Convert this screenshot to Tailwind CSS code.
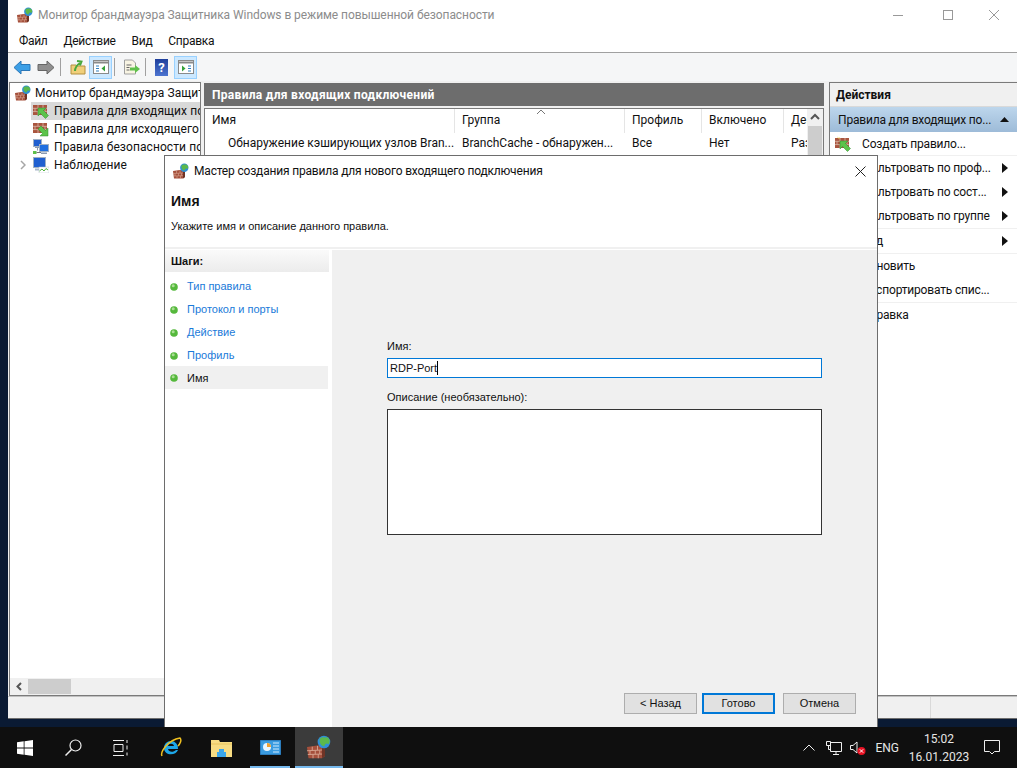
<!DOCTYPE html>
<html lang="ru">
<head>
  <meta charset="UTF-8" />
  <title>Монитор брандмауэра</title>
  <script src="https://cdn.jsdelivr.net/npm/@tailwindcss/browser@4"></script>
</head>
<body class="relative w-[1017px] h-[768px] overflow-hidden bg-[#0a1a33] font-['Roboto',sans-serif] text-[12px] leading-none tracking-[-0.18px] text-[#111]">
  <svg class="hidden">
    <symbol id="wall" viewBox="0 0 16 16">
      <path d="M0 8l10-1.500 2 1V14l-2 1.500L1 15.500z" fill="#a5503c"/>
      <path d="M10 6.500l2 1V14l-2 1.500z" fill="#6f3426"/>
      <path d="M0 10.500l10-.5M.5 13l9.500-.3M3.500 7.800v2.500M7 7.300v2.700M2 10.500v2.500M5.500 10.300v2.500M8.500 10.200v2.500M4 13v2.500M7.500 12.800v2.700" stroke="#d8a894" stroke-width=".6" fill="none"/>
      <circle cx="11.300" cy="4.700" r="4.200" fill="#2f8fd8"/>
      <path d="M8.500 2.500c2-2 3-.5 5-1 2 1.500 2 3 1 4.500-1.500-1-2.500 0-3 1.500-1.500 0-3.500-1.500-3-5z" fill="#5bb84c"/>
    </symbol>
    <symbol id="wallin" viewBox="0 0 16 16">
      <rect x="0" y="2" width="14" height="10" fill="#a9553f"/>
      <path d="M0 5.300h14M0 8.600h14M5 2v3.300M10 2v3.300M2 5.300v3.300M7 5.300v3.300M12 5.300v3.300M5 8.600V12M10 8.600V12" stroke="#e0c4b4" stroke-width=".7" fill="none"/>
    </symbol>
    <symbol id="dot" viewBox="0 0 8 8">
      <circle cx="4" cy="4" r="3.800" fill="#55b83c"/>
      <circle cx="3.200" cy="2.800" r="1.500" fill="#a9dd93"/>
    </symbol>
    <symbol id="tri" viewBox="0 0 6 10">
      <path d="M0 0l6 5-6 5z" fill="#111"/>
    </symbol>
    <symbol id="pc" viewBox="0 0 16 16">
      <rect x=".5" y=".5" width="8" height="7" fill="#1f5fd0" stroke="#9fb0c4"/>
      <path d="M2 8.500h5M4.500 8v3.500" stroke="#8a9ab0"/>
      <rect x="6.500" y="5.500" width="9" height="7" fill="#1f6fe0" stroke="#9fb0c4"/>
      <rect x="8" y="13.500" width="6" height="1.500" fill="#8a9ab0"/>
      <rect x="0" y="12" width="3.500" height="3" fill="#5fc04a"/>
      <path d="M3.500 13.500H8" stroke="#777"/>
    </symbol>
    <symbol id="pc2" viewBox="0 0 16 16">
      <rect x=".5" y=".5" width="12" height="10" fill="#1f5fd0" stroke="#9fb0c4"/>
      <path d="M2 11.500h9v2H2z" fill="#a9b7c8"/>
      <rect x="6" y="10" width="10" height="6" fill="#fff" stroke="#b8c4d0" stroke-width=".5"/>
      <path d="M6.500 14l2.500-2 2 2 2-2.500 2 1.500" stroke="#4cb03a" fill="none"/>
    </symbol>
    <symbol id="inarrow" viewBox="0 0 16 16">
      <path d="M5 5h8l-2.500 2.500 5 5-3 3-5-5L5 13z" fill="#5cc34a" stroke="#2e8a2e" stroke-width=".5"/>
    </symbol>
  </svg>

  <!-- Главное окно -->
  <div class="absolute left-[8px] top-0 w-[1009px] h-[719px] flex flex-col bg-[#f0f0f0]">
    <div class="h-[30px] shrink-0 flex items-center bg-white text-[#8c8c8c]">
      <svg class="ml-[9px] mr-[5px] w-[16px] h-[16px]"><use href="#wall"/></svg>
      <span class="tracking-[-0.07px]">Монитор брандмауэра Защитника Windows в режиме повышенной безопасности</span>
      <div class="ml-auto flex items-center">
        <svg class="w-[46px] h-[12px]" viewBox="0 0 46 12"><path d="M18 6.500h10" stroke="#999"/></svg>
        <svg class="w-[46px] h-[12px] ml-[4px]" viewBox="0 0 46 12"><rect x="18.500" y="1.500" width="9" height="9" fill="none" stroke="#999"/></svg>
        <svg class="w-[46px] h-[12px]" viewBox="0 0 46 12"><path d="M18 1l10 10M28 1L18 11" stroke="#999"/></svg>
      </div>
    </div>
    <div class="h-[23px] shrink-0 flex items-center gap-[16px] pl-[11px] bg-white border-b border-[#a0a0a0] tracking-[-0.3px]">
      <span>Файл</span><span>Действие</span><span>Вид</span><span>Справка</span>
    </div>
    <div class="h-[28px] shrink-0 flex items-center pl-[6px] bg-[#f5f6f7]">
      <svg class="w-[17px] h-[15px]" viewBox="0 0 17 15"><path d="M0 7.500L7 1v3.500h9v6H7V14z" fill="#3c9fe6" stroke="#2a77b8"/></svg>
      <svg class="w-[17px] h-[15px] ml-[6px]" viewBox="0 0 17 15"><path d="M17 7.500L10 1v3.500H1v6h9V14z" fill="#8f8f8f" stroke="#666"/></svg>
      <div class="w-px h-[18px] bg-[#a0a0a0] mx-[6px]"></div>
      <svg class="w-[16px] h-[16px] ml-[3px] mr-[3px]" viewBox="0 0 16 16"><path d="M1 6h5l1 1h8v8H1z" fill="#f0cf7a" stroke="#b49040"/><path d="M5 12c0-4 2-6 5-8M7 2l4.500.5-1.500 4" stroke="#4aa83c" stroke-width="2" fill="none"/></svg>
      <div class="w-[23px] h-[23px] flex items-center justify-center bg-[#cce8ff] border border-[#99d1ff]">
        <svg class="w-[16px] h-[14px]" viewBox="0 0 16 14"><rect x=".5" y=".5" width="15" height="13" fill="#fff" stroke="#8a8a8a"/><path d="M1 2.500h14" stroke="#8a8a8a" stroke-width="2"/><path d="M3 6h3M3 8.500h3M3 11h3" stroke="#2f7fc0"/><path d="M12 5.500v6L8.500 8.500z" fill="#35a03a"/></svg>
      </div>
      <div class="w-px h-[18px] bg-[#a0a0a0] ml-[2px] mr-[8px]"></div>
      <svg class="w-[17px] h-[17px] mr-[5px]" viewBox="0 0 17 17"><path d="M1.500 1h8l3 3v11h-11z" fill="#f8f4e3" stroke="#a0a0a0"/><path d="M3.500 6h5M3.500 8.500h3M3.500 11h3" stroke="#666"/><path d="M7 8.500h5V6l5 4-5 4v-2.500H7z" fill="#5fc04a"/></svg>
      <div class="w-px h-[18px] bg-[#a0a0a0] mr-[9px]"></div>
      <div class="w-[13px] h-[17px] mr-[6px] flex items-center justify-center bg-gradient-to-b from-[#1f3f9c] to-[#4d74d0] text-white text-[13px] font-bold">?</div>
      <div class="w-[23px] h-[23px] flex items-center justify-center bg-[#cce8ff] border border-[#99d1ff]">
        <svg class="w-[16px] h-[14px]" viewBox="0 0 16 14"><rect x=".5" y=".5" width="15" height="13" fill="#fff" stroke="#8a8a8a"/><path d="M1 2.500h14" stroke="#8a8a8a" stroke-width="2"/><path d="M10 6h3M10 8.500h3M10 11h3" stroke="#2f7fc0"/><path d="M4 5.500v6l3.500-3z" fill="#35a03a"/></svg>
      </div>
    </div>

    <!-- Панели -->
    <div class="flex-1 min-h-0 flex pt-[1px]">
      <div class="w-[192px] ml-[1px] h-[614px] flex flex-col bg-white border border-[#7a7a7a] overflow-hidden">
        <div class="flex-1 pt-[1px] tracking-[0.08px]">
          <div class="h-[18px] flex items-center whitespace-nowrap overflow-hidden pl-[5px]">
            <svg class="w-[16px] h-[16px] mr-[4px] shrink-0"><use href="#wall"/></svg>Монитор брандмауэра Защитника
          </div>
          <div class="h-[18px] ml-[21px] flex items-center whitespace-nowrap overflow-hidden bg-[#d9d9d9] pl-[2px]">
            <svg class="w-[16px] h-[16px] mr-[5px] shrink-0"><use href="#wallin"/><use href="#inarrow"/></svg>Правила для входящих подключений
          </div>
          <div class="h-[18px] ml-[21px] flex items-center whitespace-nowrap overflow-hidden pl-[2px]">
            <svg class="w-[16px] h-[16px] mr-[5px] shrink-0"><use href="#wallin"/><path d="M15 15H7l2.500-2.500-4.500-4.500 3-3 4.500 4.500L15 7z" fill="#5cc34a" stroke="#2e8a2e" stroke-width=".5"/></svg>Правила для исходящего подключения
          </div>
          <div class="h-[18px] ml-[21px] flex items-center whitespace-nowrap overflow-hidden pl-[2px]">
            <svg class="w-[16px] h-[16px] mr-[5px] shrink-0"><use href="#pc"/></svg>Правила безопасности подключения
          </div>
          <div class="h-[18px] flex items-center whitespace-nowrap overflow-hidden pl-[10px]">
            <svg class="w-[6px] h-[10px] mr-[7px] shrink-0" viewBox="0 0 6 10"><path d="M1 1l4 4-4 4" stroke="#a6a6a6" stroke-width="1.500" fill="none"/></svg>
            <svg class="w-[16px] h-[16px] mr-[5px] shrink-0"><use href="#pc2"/></svg>Наблюдение
          </div>
        </div>
        <div class="h-[17px] shrink-0 flex items-center bg-[#f0f0f0]">
          <svg class="w-[18px] h-[17px]" viewBox="0 0 18 17"><path d="M11 5L7.500 8.500 11 12" stroke="#555" stroke-width="2" fill="none"/></svg>
          <div class="w-[43px] h-[15px] bg-[#cdcdcd]"></div>
        </div>
      </div>

      <div class="w-[620px] ml-[3px] pt-[1px] h-[614px] flex flex-col">
        <div class="h-[23px] shrink-0 flex items-center pl-[7px] bg-[#6d6d6d] text-white font-bold border border-[#6d6d6d] tracking-[0.3px]">Правила для входящих подключений</div>
        <div class="mt-[2px] flex-1 relative bg-white border border-[#7a7a7a] overflow-hidden tracking-normal">
          <div class="grid grid-cols-[250px_170px_77px_82px_40px]">
            <div class="h-[24px] flex items-center pl-[7px] pb-[2px] border-r border-[#e5e5e5]">Имя</div>
            <div class="h-[24px] flex items-center pl-[7px] pb-[2px] border-r border-[#e5e5e5]">Группа</div>
            <div class="h-[24px] flex items-center pl-[7px] pb-[2px] border-r border-[#e5e5e5]">Профиль</div>
            <div class="h-[24px] flex items-center pl-[7px] pb-[2px] border-r border-[#e5e5e5]">Включено</div>
            <div class="h-[24px] flex items-center pl-[7px] pb-[2px] overflow-hidden">Действие</div>
            <div class="h-[22px] flex items-center pl-[23px] pb-[3px] whitespace-nowrap overflow-hidden">Обнаружение кэширующих узлов Bran...</div>
            <div class="h-[22px] flex items-center pl-[7px] pb-[3px] whitespace-nowrap overflow-hidden">BranchCache - обнаружен...</div>
            <div class="h-[22px] flex items-center pl-[7px] pb-[3px]">Все</div>
            <div class="h-[22px] flex items-center pl-[7px] pb-[3px]">Нет</div>
            <div class="h-[22px] flex items-center pl-[7px] pb-[3px] overflow-hidden">Разрешить</div>
          </div>
          <svg class="absolute left-[331px] top-0 w-[10px] h-[6px]" viewBox="0 0 10 6"><path d="M1 5l4-4 4 4" stroke="#777" fill="none"/></svg>
          <!-- Вертикальная полоса прокрутки -->
          <div class="absolute right-0 top-0 bottom-0 w-[16px] flex flex-col bg-[#f0f0f0]">
            <svg class="w-[16px] h-[17px] shrink-0" viewBox="0 0 16 17"><path d="M4 10l4-4 4 4" stroke="#555" stroke-width="2" fill="none"/></svg>
            <div class="flex-1 mx-[1px] bg-[#cdcdcd]"></div>
          </div>
        </div>
      </div>

      <div class="ml-[5px] flex-1 h-[614px] flex flex-col bg-white border border-[#7a7a7a] border-r-0">
        <div class="h-[24px] shrink-0 flex items-center pl-[6px] bg-[#f0f0f0] font-bold border-b border-[#d9d9d9] tracking-normal">Действия</div>
        <div class="h-[25px] shrink-0 flex items-center justify-between whitespace-nowrap pl-[8px] pr-[8px] bg-gradient-to-b from-[#bdd6ec] to-[#9dbbd8]">
          <span>Правила для входящих по...</span>
          <svg class="w-[9px] h-[5px]" viewBox="0 0 9 5"><path d="M0 5l4.500-5L9 5z" fill="#111"/></svg>
        </div>
        <div class="h-[24px] flex items-center pl-[5px] border-b border-[#f0f0f0]"><svg class="w-[16px] h-[16px] mr-[11px]"><use href="#wallin"/><use href="#inarrow"/><path d="M2 0l.8 2 2-.8-.8 2" fill="#f5d040"/></svg>Создать правило...</div>
        <div class="h-[24px] flex items-center justify-between pl-[32px] pr-[9px]"><span>Фильтровать по проф...</span><svg class="w-[6px] h-[10px]"><use href="#tri"/></svg></div>
        <div class="h-[24px] flex items-center justify-between pl-[32px] pr-[9px]"><span>Фильтровать по сост...</span><svg class="w-[6px] h-[10px]"><use href="#tri"/></svg></div>
        <div class="h-[25px] flex items-center justify-between pl-[32px] pr-[9px] border-b border-[#f0f0f0]"><span>Фильтровать по группе</span><svg class="w-[6px] h-[10px]"><use href="#tri"/></svg></div>
        <div class="h-[25px] flex items-center justify-between pl-[32px] pr-[9px] border-b border-[#f0f0f0]"><span>Вид</span><svg class="w-[6px] h-[10px]"><use href="#tri"/></svg></div>
        <div class="h-[24px] flex items-center pl-[32px]">Обновить</div>
        <div class="h-[25px] flex items-center pl-[32px] border-b border-[#f0f0f0]">Экспортировать спис...</div>
        <div class="h-[24px] flex items-center pl-[32px]">Справка</div>
      </div>
    </div>
    <div class="h-[23px] shrink-0 flex justify-end border-t border-[#c0c0c0] border-b border-b-[#6d6d6d]">
      <div class="w-[87px] border-l border-[#d9d9d9]"></div>
    </div>
  </div>

  <!-- Мастер -->
  <div class="absolute left-[164px] top-[155px] w-[714px] h-[572px] flex flex-col bg-white border-l border-t border-r border-[#6d6d6d]">
    <div class="h-[30px] shrink-0 flex items-center">
      <svg class="ml-[8px] mr-[5px] w-[16px] h-[16px]"><use href="#wall"/></svg>
      <span>Мастер создания правила для нового входящего подключения</span>
      <svg class="ml-auto mr-[11px] w-[11px] h-[11px]" viewBox="0 0 11 11"><path d="M.5.500l10 10M10.500.500l-10 10" stroke="#222"/></svg>
    </div>
    <div class="h-[63px] shrink-0 pl-[6px] pt-[7px] border-b-2 border-[#f0f0f0] font-['Liberation_Sans',sans-serif] tracking-normal">
      <div class="font-bold text-[14px] leading-[16px]">Имя</div>
      <div class="mt-[12px] text-[11px]">Укажите имя и описание данного правила.</div>
    </div>
    <div class="flex-1 min-h-0 flex pt-[1px] font-['Liberation_Sans',sans-serif] text-[11px] tracking-normal">
      <div class="w-[164px] shrink-0">
        <div class="h-[22px] flex items-center pl-[6px] font-bold bg-gradient-to-b from-[#fafafa] to-[#ececec]">Шаги:</div>
        <div class="mt-[3px] text-[#1a7ad9]">
          <div class="h-[23px] flex items-center pl-[5px]"><svg class="w-[8px] h-[8px] mr-[9px]"><use href="#dot"/></svg>Тип правила</div>
          <div class="h-[23px] flex items-center pl-[5px]"><svg class="w-[8px] h-[8px] mr-[9px]"><use href="#dot"/></svg>Протокол и порты</div>
          <div class="h-[23px] flex items-center pl-[5px]"><svg class="w-[8px] h-[8px] mr-[9px]"><use href="#dot"/></svg>Действие</div>
          <div class="h-[23px] flex items-center pl-[5px]"><svg class="w-[8px] h-[8px] mr-[9px]"><use href="#dot"/></svg>Профиль</div>
          <div class="h-[23px] -mt-[1px] mr-[1px] flex items-center pl-[5px] pt-[1px] bg-[#f0f0f0] text-[#111]"><svg class="w-[8px] h-[8px] mr-[9px]"><use href="#dot"/></svg>Имя</div>
        </div>
      </div>
      <div class="ml-[3px] flex-1 flex flex-col bg-[#f0f0f0] pl-[55px] pr-[55px] pt-[91px]">
        <div>Имя:</div>
        <div class="mt-[6px] h-[20px] flex items-center pl-[2px] bg-white border border-[#0078d7]">RDP-Port<span class="w-px h-[14px] bg-black"></span></div>
        <div class="mt-[14px]">Описание (необязательно):</div>
        <div class="mt-[6px] h-[126px] bg-white border border-[#333]"></div>
        <div class="mt-[158px] -mr-[34px] flex justify-end">
          <div class="w-[73px] h-[21px] flex items-center justify-center bg-[#e1e1e1] border border-[#adadad]">&lt; Назад</div>
          <div class="w-[73px] h-[21px] ml-[5px] flex items-center justify-center bg-[#e1e1e1] border-2 border-[#0078d7]">Готово</div>
          <div class="w-[73px] h-[21px] ml-[8px] flex items-center justify-center bg-[#e1e1e1] border border-[#adadad]">Отмена</div>
        </div>
      </div>
    </div>
  </div>

  <!-- Панель задач -->
  <div class="absolute left-0 bottom-0 w-[1017px] h-[41px] flex items-center bg-[#0f0f0f] text-[#e6e6e6] tracking-normal">
    <div class="w-[49px] flex justify-center">
      <svg class="w-[16px] h-[16px]" viewBox="0 0 16 16"><path d="M0 2.300l6.700-1v6.300H0zM7.500 1.200L16 0v7.600H7.500zM0 8.400h6.700v6.300L0 13.700zM7.500 8.400H16V16l-8.500-1.200z" fill="#fff"/></svg>
    </div>
    <div class="w-[48px] flex justify-center">
      <svg class="w-[17px] h-[17px]" viewBox="0 0 17 17"><circle cx="10.500" cy="6.500" r="5.500" fill="none" stroke="#eee" stroke-width="1.200"/><path d="M6.500 10.500L.5 16.500" stroke="#eee" stroke-width="1.500"/></svg>
    </div>
    <div class="w-[48px] flex justify-center">
      <svg class="w-[16px] h-[16px]" viewBox="0 0 16 16"><path d="M0 .5h11M0 15.500h11M1 4.500h9v7H1zM14 0v3M14 5.500v4M14 12.500v3" stroke="#eee" fill="none"/></svg>
    </div>
    <div class="w-[48px] flex justify-center ml-[2px]">
      <svg class="w-[22px] h-[22px]" viewBox="0 0 22 22"><path d="M11 4a7 7 0 0 1 7 8H8c.5 3 5 4 8 1h2c-2 6-14 6-14-2 0-4 3-7 7-7zm-3 5h6c-.5-3-5.500-3-6 0z" fill="#1ea7e8"/><path d="M2 19C0 15 8 3 20 1c2 2 0 6-2 8" stroke="#f0c020" stroke-width="1.500" fill="none"/></svg>
    </div>
    <div class="w-[48px] flex justify-center ml-[2px]">
      <svg class="w-[21px] h-[18px]" viewBox="0 0 21 18"><path d="M0 1h8l1 2h12v15H0z" fill="#f7dc83"/><path d="M0 5h21" stroke="#e8c35e"/><path d="M6 18v-5h2v-3h5v3h2v5z" fill="#3aa6ea"/></svg>
    </div>
    <div class="w-[45px] ml-[5px] h-full relative flex justify-center items-center pr-[5px]">
      <svg class="w-[21px] h-[15px]" viewBox="0 0 21 15"><rect width="21" height="15" fill="#3a9be0" stroke="#1e5f98"/><circle cx="7" cy="7" r="4" fill="#eaf6ff"/><path d="M7 7V3a4 4 0 0 1 4 4z" fill="#f0a030"/><path d="M13 3h6M13 6h6M13 9h6M13 12h6" stroke="#cfeaff"/></svg>
      <div class="absolute left-0 right-[5px] bottom-0 h-[2px] bg-[#76b9ed]"></div>
    </div>
    <div class="w-[48px] h-full flex justify-center items-center bg-[#3b3b3b] border-b-2 border-[#76b9ed]">
      <svg class="w-[24px] h-[24px]"><use href="#wall"/></svg>
    </div>
    <div class="ml-auto flex items-center h-full">
      <svg class="w-[12px] h-[7px] mr-[11px]" viewBox="0 0 12 7"><path d="M.5 6.500l5.500-5.500 5.500 5.500" stroke="#eee" fill="none"/></svg>
      <svg class="w-[16px] h-[16px] mr-[8px]" viewBox="0 0 16 16"><path d="M4.500 2.500h11v9h-11zM10 11.500v3M7 14.500h6M.5 1.500h4v4h-4zM2.500 5.500v4H4.500" stroke="#eee" fill="none"/></svg>
      <svg class="w-[16px] h-[16px] mr-[9px]" viewBox="0 0 16 16"><path d="M.5 5.500h2.500L7 2v11L3 9.500H.5z" stroke="#eee" fill="none"/><circle cx="11.500" cy="11" r="4" fill="#e81123"/><path d="M9.800 9.300l3.400 3.400M13.200 9.300l-3.400 3.400" stroke="#fff"/></svg>
      <span class="mr-[9px]">ENG</span>
      <div class="w-[62px] text-center leading-[18px] mr-[14px]"><div>15:02</div><div>16.01.2023</div></div>
      <svg class="w-[16px] h-[15px] mr-[17px]" viewBox="0 0 16 15"><path d="M.5.500h15v11h-5L8 14l-2.500-2.500h-5z" stroke="#eee" fill="none"/></svg>
    </div>
  </div>
</body>
</html>
